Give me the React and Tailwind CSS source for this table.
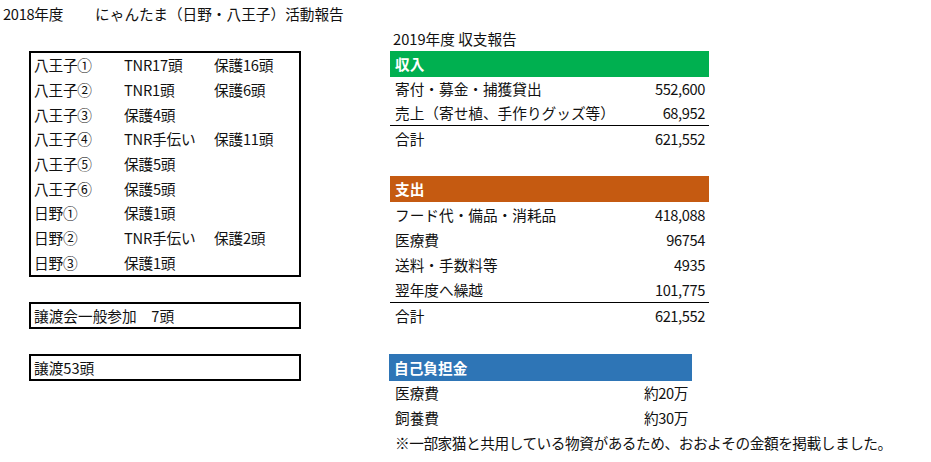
import React from "react";

const boxRows = [
  ["八王子①", "TNR17頭", "保護16頭"],
  ["八王子②", "TNR1頭", "保護6頭"],
  ["八王子③", "保護4頭", ""],
  ["八王子④", "TNR手伝い", "保護11頭"],
  ["八王子⑤", "保護5頭", ""],
  ["八王子⑥", "保護5頭", ""],
  ["日野①", "保護1頭", ""],
  ["日野②", "TNR手伝い", "保護2頭"],
  ["日野③", "保護1頭", ""],
];

function Row({ label, value, h = "h-[25px]", extra = "" }) {
  return (
    <div className={`flex items-center justify-between pl-[5px] pr-[4px] ${h} ${extra}`}>
      <span>{label}</span>
      <span className="tracking-[-0.4px]">{value}</span>
    </div>
  );
}

function Header({ label, color, w = "w-[319px]", h = "h-[26px]" }) {
  return (
    <div className={`flex items-center pl-[5px] font-bold text-white ${color} ${w} ${h}`}>
      {label}
    </div>
  );
}

export default function App() {
  return (
    <div className="w-[931px] h-[462px] bg-white text-[#111] text-[14.67px] [text-spacing-trim:space-all] font-['Noto_Sans_CJK_JP','Noto_Sans',sans-serif] overflow-hidden">
      <div className="flex items-center h-[26px] pt-[2px]">
        <span className="ml-[3px] tracking-[-0.3px]">2018年度</span>
        <span className="ml-[32px]">にゃんたま（日野・八王子）活動報告</span>
      </div>
      <div className="flex">
        {/* left column */}
        <div className="ml-[29px] w-[272px] flex flex-col">
          <div className="h-[25px]" />
          <div className="border-2 border-black h-[226px] flex flex-col">
            {boxRows.map((r, i) => (
              <div key={i} className="flex items-center flex-1 tracking-[-0.2px]">
                <span className="w-[90px] pl-[3px]">{r[0]}</span>
                <span className="w-[90px] pl-[3px]">{r[1]}</span>
                <span className="w-[86px] pl-[3px]">{r[2]}</span>
              </div>
            ))}
          </div>
          <div className="h-[25px]" />
          <div className="border-2 border-black h-[27px] flex items-center pl-[3px]">
            譲渡会一般参加　7頭
          </div>
          <div className="h-[25px]" />
          <div className="border-2 border-black h-[27px] flex items-center pl-[3px]">
            譲渡53頭
          </div>
        </div>
        {/* right column */}
        <div className="ml-[89px] w-[319px] flex flex-col">
          <div className="h-[25px] flex items-center pl-[3px]">2019年度 収支報告</div>
          <Header label="収入" color="bg-[#00B050]" />
          <Row label="寄付・募金・捕獲貸出" value="552,600" h="h-[24px]" />
          <Row label="売上（寄せ植、手作りグッズ等）" value="68,952" extra="border-b border-black" />
          <Row label="合計" value="621,552" />
          <div className="h-[25px]" />
          <Header label="支出" color="bg-[#C55A11]" />
          <Row label="フード代・備品・消耗品" value="418,088" />
          <Row label="医療費" value="96754" />
          <Row label="送料・手数料等" value="4935" />
          <Row label="翌年度へ繰越" value="101,775" h="h-[26px]" extra="border-b border-black" />
          <Row label="合計" value="621,552" />
          <div className="h-[26px]" />
          <div className="-ml-[1px]">
            <Header label="自己負担金" color="bg-[#2E75B6]" w="w-[303px]" h="h-[27px]" />
          </div>
          <div className="w-[302px]">
            <Row label="医療費" value="約20万" h="h-[24px]" />
            <Row label="飼養費" value="約30万" />
          </div>
          <div className="h-[25px] flex items-center pl-[5px] whitespace-nowrap tracking-[-0.45px]">
            ※一部家猫と共用している物資があるため、おおよその金額を掲載しました。
          </div>
        </div>
      </div>
    </div>
  );
}
